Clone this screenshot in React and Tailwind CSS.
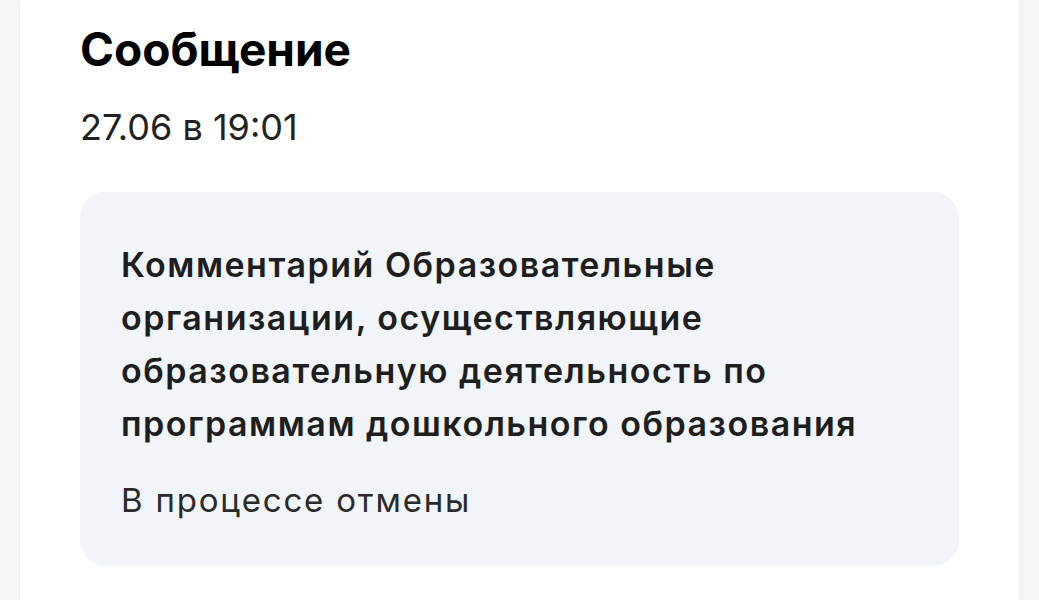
export default function App() {
  return (
    <div className="h-[600px] w-[1039px] overflow-hidden bg-[#f6f6f9] px-5" style={{ fontFamily: 'Inter, "Noto Sans", sans-serif' }}>
      <div className="flex h-[625px] flex-col rounded-b-[28px] bg-white px-[60px] pt-[21px] shadow-[0_0_6px_rgba(0,0,0,0.05)]">
        <h1 className="text-[46px] font-bold leading-[56px] text-black">Сообщение</h1>
        <div className="mt-[28px] text-[36px] leading-[44px] text-[#222]">27.06 в 19:01</div>
        <div className="mt-[43px] rounded-[26px] bg-[#f1f4f9] pl-[41px] pr-[40px] pt-[46px] pb-[46px]">
          <div className="text-[34px] font-semibold leading-[53px] tracking-[1.5px] text-[#1e1e1e]">
            Комментарий Образовательные организации, осуществляющие образовательную деятельность по программам дошкольного образования
          </div>
          <div className="mt-[30px] text-[33px] leading-[40px] tracking-[1.8px] text-[#2a2a2a]">В процессе отмены</div>
        </div>
      </div>
    </div>
  );
}
